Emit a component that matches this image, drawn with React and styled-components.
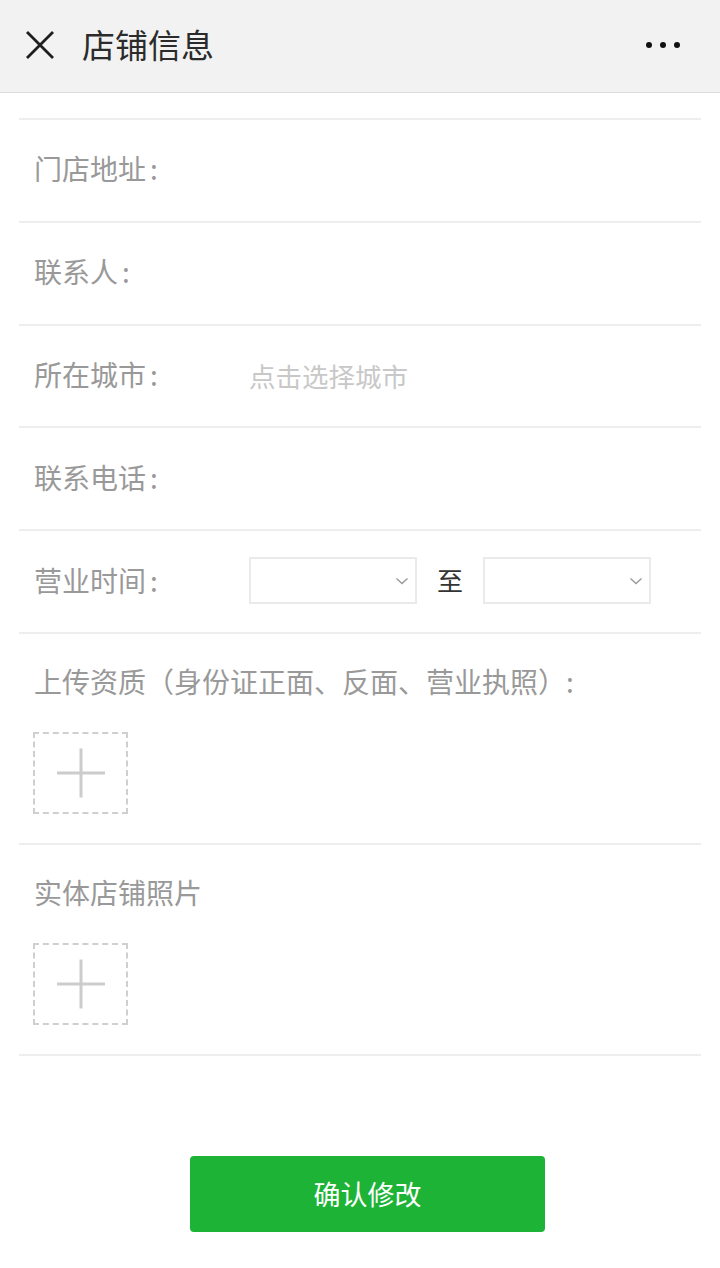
import React from "react";
import styled, { createGlobalStyle } from "styled-components";

const GlobalStyle = createGlobalStyle`
  * { box-sizing: border-box; }
  body {
    margin: 0;
    background: #fff;
    font-family: "Noto Sans CJK SC", "Noto Sans", sans-serif;
  }
`;

const Header = styled.header`
  height: 93px;
  background: #f2f2f2;
  border-bottom: 1px solid #dcdcdc;
  display: flex;
  align-items: center;
  padding: 0 26px;
`;

const CloseBtn = styled.div`
  width: 28px;
  height: 28px;
  display: flex;
  margin-top: -3px;
`;

const Title = styled.h1`
  margin: -4px 0 0 28px;
  font-size: 33px;
  font-weight: 400;
  color: #2b2b2b;
  flex: 1;
  line-height: 1;
`;

const More = styled.div`
  display: flex;
  gap: 8px;
  margin: -3px 14px 0 0;
  span {
    width: 6px;
    height: 6px;
    border-radius: 50%;
    background: #111;
  }
`;

const Form = styled.div`
  margin: 25px 19px 0;
  border-top: 2px solid #eeeeee;
`;

const Row = styled.div`
  height: 102.8px;
  border-bottom: 2px solid #eeeeee;
  display: flex;
  align-items: center;
  padding: 0 15px 4px;
`;

const Label = styled.div`
  width: ${(p) => (p.$wide ? "auto" : "215px")};
  flex-shrink: 0;
  font-size: 28px;
  line-height: 30px;
  color: #999;
`;

const Colon = styled.span`
  margin-left: 4px;
`;

const Placeholder = styled.div`
  font-size: 26.5px;
  color: #c8c8c8;
  margin-top: 3px;
`;

const SelectBox = styled.div`
  width: 168px;
  height: 47px;
  border: 2px solid #eaeaea;
  display: flex;
  align-items: center;
  justify-content: flex-end;
  padding-right: 6px;
  margin-top: 2px;
`;

const To = styled.span`
  font-size: 26px;
  color: #333;
  margin: 0 20px;
`;

const Section = styled.div`
  border-bottom: 2px solid #eeeeee;
  padding: 32px 15px 29px;
`;

const UploadBox = styled.div`
  position: relative;
  width: 95px;
  height: 82px;
  margin-top: 36px;
  margin-left: -1px;
  border: 2px dashed #cfcfcf;
  &::before,
  &::after {
    content: "";
    position: absolute;
    background: #cccccc;
    left: 50%;
    top: 50%;
    transform: translate(-50%, -50%);
  }
  &::before {
    width: 48px;
    height: 3px;
  }
  &::after {
    width: 3px;
    height: 49px;
  }
`;

const Footer = styled.div`
  display: flex;
  justify-content: center;
  padding: 100px 0 0 15px;
`;

const SubmitButton = styled.button`
  width: 355px;
  height: 76px;
  border: none;
  border-radius: 4px;
  background: #1db336;
  color: #fff;
  font-family: inherit;
  font-size: 27px;
`;

const Chevron = () => (
  <svg width="14" height="10" viewBox="0 0 14 10">
    <path d="M1.5 2.5 L7 7.5 L12.5 2.5" fill="none" stroke="#999" strokeWidth="1.4" />
  </svg>
);

const fields = ["门店地址", "联系人", "所在城市", "联系电话"];

export default function App() {
  return (
    <>
      <GlobalStyle />
      <Header>
        <CloseBtn>
          <svg width="28" height="28" viewBox="0 0 28 28">
            <path d="M1 1 L27 27 M27 1 L1 27" stroke="#1e1e1e" strokeWidth="2.8" />
          </svg>
        </CloseBtn>
        <Title>店铺信息</Title>
        <More>
          <span />
          <span />
          <span />
        </More>
      </Header>
      <Form>
        {fields.map((f) => (
          <Row key={f}>
            <Label>
              {f}
              <Colon>:</Colon>
            </Label>
            {f === "所在城市" && <Placeholder>点击选择城市</Placeholder>}
          </Row>
        ))}
        <Row>
          <Label>
            营业时间<Colon>:</Colon>
          </Label>
          <SelectBox>
            <Chevron />
          </SelectBox>
          <To>至</To>
          <SelectBox>
            <Chevron />
          </SelectBox>
        </Row>
        <Section>
          <Label $wide>上传资质（身份证正面、反面、营业执照）:</Label>
          <UploadBox />
        </Section>
        <Section>
          <Label $wide>实体店铺照片</Label>
          <UploadBox />
        </Section>
      </Form>
      <Footer>
        <SubmitButton>确认修改</SubmitButton>
      </Footer>
    </>
  );
}
